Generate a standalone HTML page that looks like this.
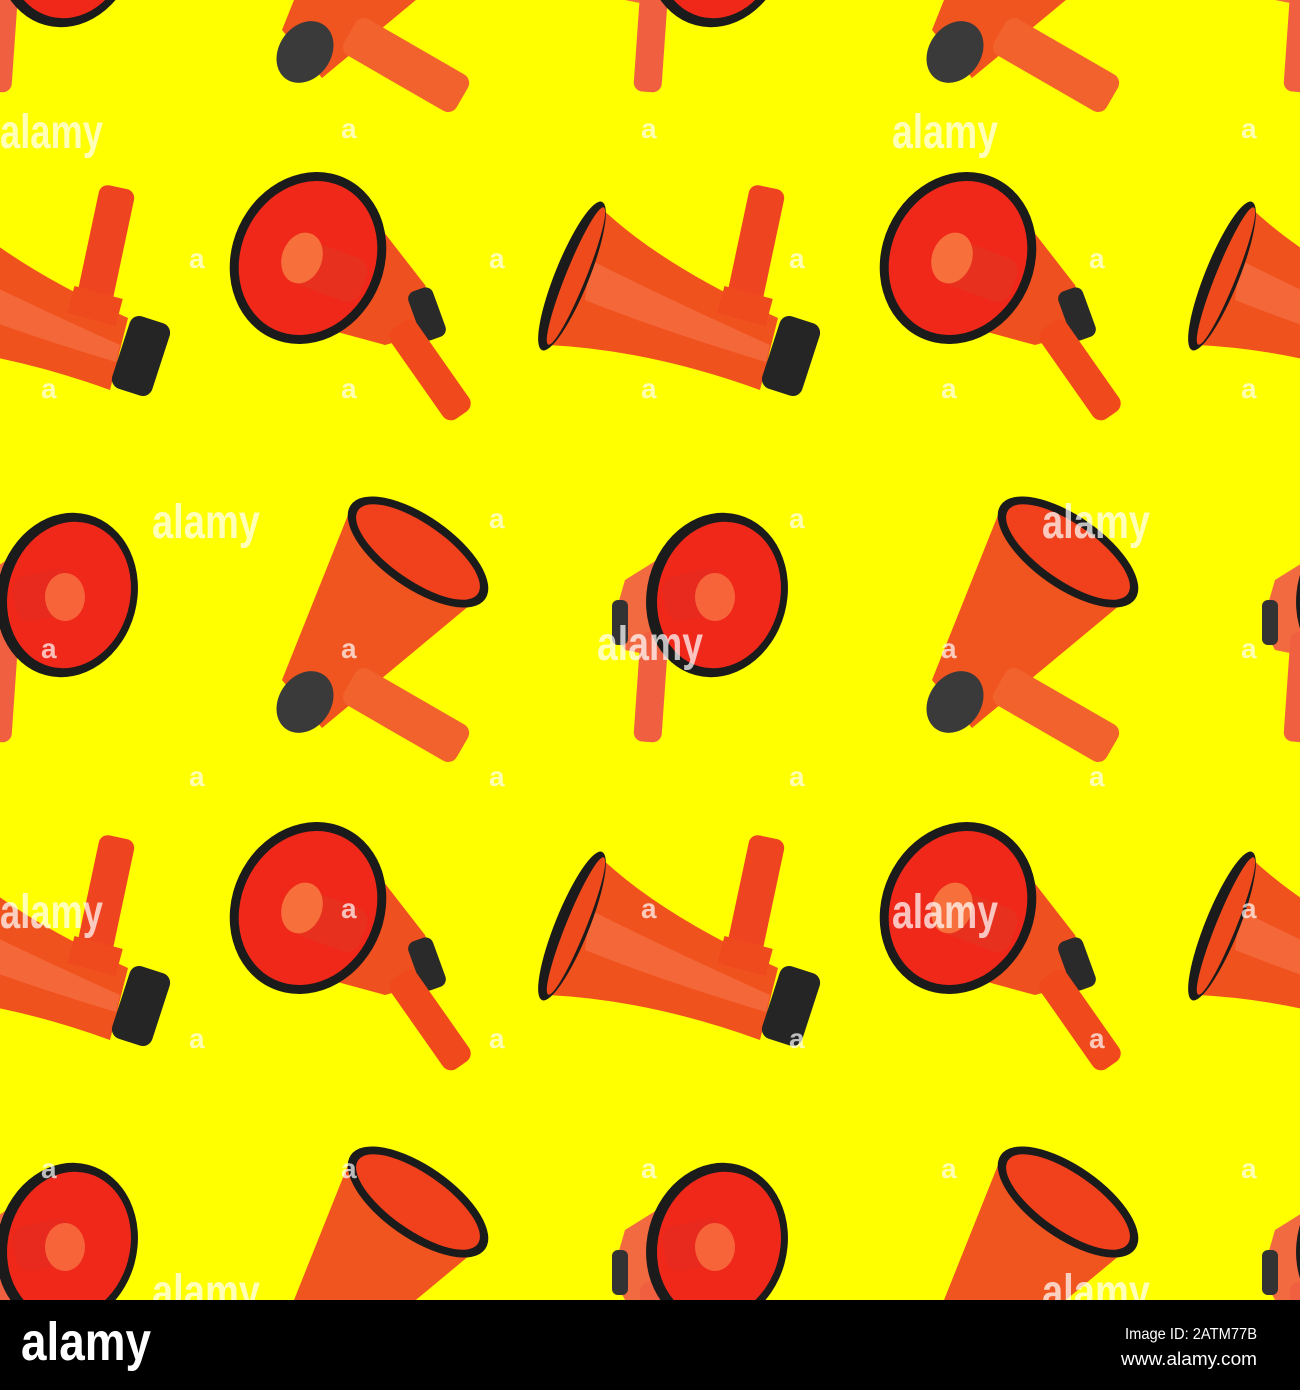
<!DOCTYPE html>
<html><head><meta charset="utf-8"><style>
html,body{margin:0;padding:0;background:#000;}
body{width:1300px;height:1390px;overflow:hidden;position:relative;font-family:"Liberation Sans",sans-serif;}
svg{display:block;position:absolute;left:0;top:0}
</style></head><body>
<svg width="1300" height="1390" viewBox="0 0 1300 1390">
<defs>
<clipPath id="cp"><rect width="1300" height="1300"/></clipPath>
<g id="tile">
 <!-- A -->
 <polygon points="355,195 425,285 440,330 385,345 330,330" fill="#ee5020"/>
 <rect x="414" y="288" width="26" height="52" rx="8" fill="#2a2a2a" transform="rotate(-20 427 314)"/>
 <rect x="414" y="315" width="32" height="110" rx="10" fill="#f04a1c" transform="rotate(-35 430 370)"/>
 <ellipse cx="308" cy="258" rx="76" ry="88" fill="#1b1b1b" transform="rotate(25 308 258)"/>
 <ellipse cx="308" cy="258" rx="67" ry="79" fill="#f0281a" transform="rotate(25 308 258)"/>
 <rect x="298" y="238" width="70" height="46" rx="14" fill="#e8301e" transform="rotate(20 300 260)"/>
 <ellipse cx="302" cy="258" rx="20" ry="26" fill="#f7703c" transform="rotate(20 302 258)"/>
 <!-- B -->
 <path d="M598,205 Q660,265 778,318 L760,390 Q650,350 548,345 Z" fill="#f0521e"/>
 <path d="M590,260 Q670,300 770,345 L766,362 Q660,330 585,300 Z" fill="#f7774a" opacity=".6"/>
 <rect x="770" y="318" width="42" height="76" rx="10" fill="#252525" transform="rotate(18 791 356)"/>
 <rect x="738" y="186" width="36" height="118" rx="9" fill="#ef4420" transform="rotate(12 756 245)"/>
 <rect x="720" y="292" width="50" height="28" fill="#ef4a1e" transform="rotate(15 745 306)"/>
 <ellipse cx="572" cy="276" rx="17" ry="80" fill="#1b1b1b" transform="rotate(22 572 276)"/>
 <ellipse cx="576" cy="276" rx="10" ry="74" fill="#ee4a1c" transform="rotate(22 576 276)"/>
 <!-- C -->
 <polygon points="665,555 625,580 612,625 625,650 675,660" fill="#f26a40"/>
 <rect x="612" y="600" width="16" height="45" rx="6" fill="#333"/>
 <rect x="637" y="632" width="28" height="110" rx="9" fill="#f06040" transform="rotate(4 651 687)"/>
 <ellipse cx="717" cy="595" rx="70" ry="83" fill="#1b1b1b" transform="rotate(15 717 595)"/>
 <ellipse cx="719" cy="595" rx="61" ry="74" fill="#f0281a" transform="rotate(15 719 595)"/>
 <rect x="664" y="573" width="62" height="46" rx="14" fill="#e82a1e" transform="rotate(-12 690 597)"/>
 <ellipse cx="715" cy="597" rx="20" ry="24" fill="#f7643a"/>
 <!-- D -->
 <polygon points="352,505 282,680 322,728 470,605" fill="#f0541f"/>
 <ellipse cx="305" cy="702" rx="26" ry="33" fill="#3a3a3a" transform="rotate(35 305 702)"/>
 <rect x="385" y="650" width="42" height="130" rx="10" fill="#f2622c" transform="rotate(-60 406 715)"/>
 <ellipse cx="418" cy="552" rx="82" ry="36" fill="#1b1b1b" transform="rotate(35 418 552)"/>
 <ellipse cx="418" cy="552" rx="73" ry="28" fill="#f0401c" transform="rotate(35 418 552)"/>
</g>
</defs>
<rect width="1300" height="1300" fill="#ffff00"/>
<g clip-path="url(#cp)">
 <use href="#tile" transform="translate(-650,-650)"/><use href="#tile" transform="translate(0,-650)"/><use href="#tile" transform="translate(650,-650)"/>
 <use href="#tile" transform="translate(-650,0)"/><use href="#tile"/><use href="#tile" transform="translate(650,0)"/>
 <use href="#tile" transform="translate(-650,650)"/><use href="#tile" transform="translate(0,650)"/><use href="#tile" transform="translate(650,650)"/>
</g>
<g clip-path="url(#cp)" fill="#fff" fill-opacity=".72" font-family="'Liberation Sans',sans-serif" font-weight="bold" font-size="48">
 <text x="0" y="148" textLength="103" lengthAdjust="spacingAndGlyphs">alamy</text>
 <text x="892" y="148" textLength="106" lengthAdjust="spacingAndGlyphs">alamy</text>
 <text x="152" y="538" textLength="108" lengthAdjust="spacingAndGlyphs">alamy</text>
 <text x="1042" y="538" textLength="108" lengthAdjust="spacingAndGlyphs">alamy</text>
 <text x="597" y="660" textLength="106" lengthAdjust="spacingAndGlyphs">alamy</text>
 <text x="0" y="928" textLength="103" lengthAdjust="spacingAndGlyphs">alamy</text>
 <text x="892" y="928" textLength="106" lengthAdjust="spacingAndGlyphs">alamy</text>
 <text x="152" y="1308" textLength="108" lengthAdjust="spacingAndGlyphs">alamy</text>
 <text x="1042" y="1308" textLength="108" lengthAdjust="spacingAndGlyphs">alamy</text>
</g>
<g clip-path="url(#cp)" fill="#fff" fill-opacity=".7" font-family="'Liberation Sans',sans-serif" font-weight="bold" font-size="28">
 <text x="341" y="138">a</text><text x="641" y="138">a</text><text x="1241" y="138">a</text>
 <text x="189" y="268">a</text><text x="489" y="268">a</text><text x="789" y="268">a</text><text x="1089" y="268">a</text>
 <text x="41" y="398">a</text><text x="341" y="398">a</text><text x="641" y="398">a</text><text x="941" y="398">a</text><text x="1241" y="398">a</text>
 <text x="489" y="528">a</text><text x="789" y="528">a</text>
 <text x="41" y="658">a</text><text x="341" y="658">a</text><text x="941" y="658">a</text><text x="1241" y="658">a</text>
 <text x="189" y="786">a</text><text x="489" y="786">a</text><text x="789" y="786">a</text><text x="1089" y="786">a</text>
 <text x="341" y="918">a</text><text x="641" y="918">a</text><text x="1241" y="918">a</text>
 <text x="189" y="1048">a</text><text x="489" y="1048">a</text><text x="789" y="1048">a</text><text x="1089" y="1048">a</text>
 <text x="41" y="1178">a</text><text x="341" y="1178">a</text><text x="641" y="1178">a</text><text x="941" y="1178">a</text><text x="1241" y="1178">a</text>
</g>
<rect x="0" y="1300" width="1300" height="90" fill="#000"/>
<text x="21" y="1360" fill="#fff" font-family="'Liberation Sans',sans-serif" font-weight="bold" font-size="54" textLength="130" lengthAdjust="spacingAndGlyphs">alamy</text>
<text x="1257" y="1339" fill="#fff" font-family="'Liberation Sans',sans-serif" font-size="16" text-anchor="end" textLength="132" lengthAdjust="spacingAndGlyphs">Image ID: 2ATM77B</text>
<text x="1257" y="1365" fill="#fff" font-family="'Liberation Sans',sans-serif" font-size="18" text-anchor="end" textLength="136" lengthAdjust="spacingAndGlyphs">www.alamy.com</text>
</svg>
</body></html>
